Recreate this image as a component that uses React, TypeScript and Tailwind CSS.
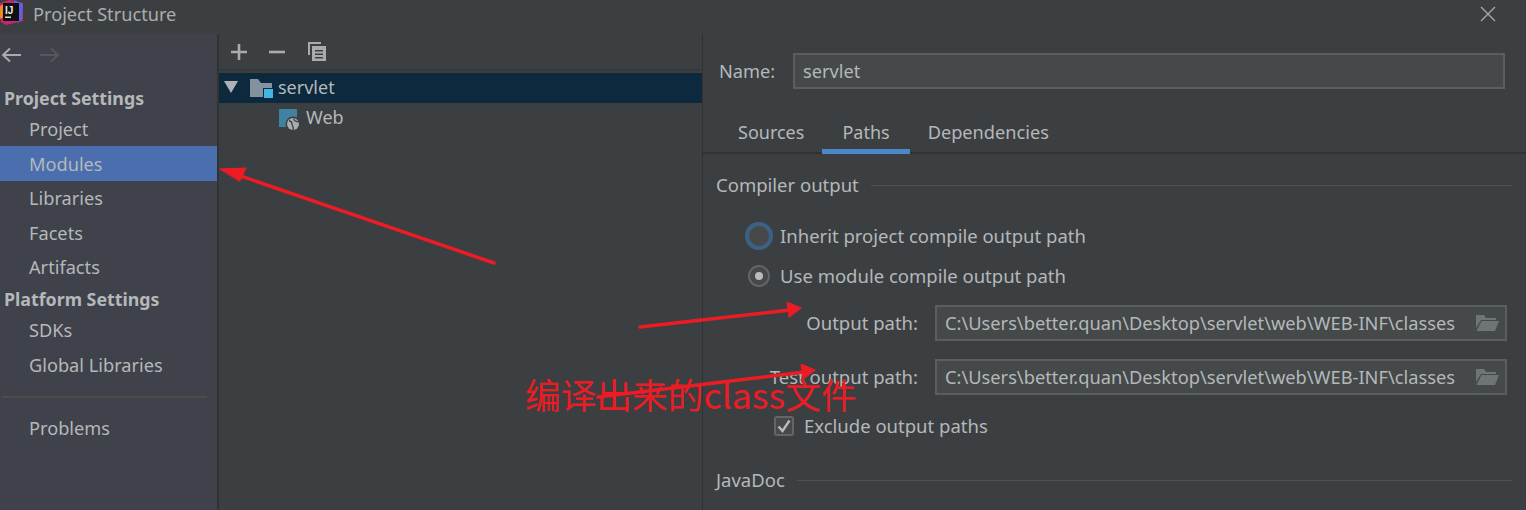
const font = "font-['Noto_Sans',sans-serif]";

function NavItem({ label, active, cls }: { label: string; active?: boolean; cls: string }) {
  return (
    <div className={`flex items-center pl-[29px] text-[18.2px] leading-none ${cls} ${active ? 'bg-[#4b6eaf]' : ''}`}>
      {label}
    </div>
  );
}

function PathRow({ label, mt }: { label: string; mt: string }) {
  return (
    <div className={`flex h-[36px] items-center ${mt}`}>
      <div className="w-[232px] pr-[17px] text-right">{label}</div>
      <div className="flex h-[36px] w-[572px] items-center justify-between border-2 border-[#5b5e60] bg-[#45494a] pl-[8px] pr-[6px]">
        <span className="whitespace-nowrap text-[18.25px]">C:\Users\better.quan\Desktop\servlet\web\WEB-INF\classes</span>
        <svg width="24" height="18" viewBox="0 0 24 18">
          <path d="M1 1h8l2 3h10v2H6L1 14z" fill="#6e7577" />
          <path d="M6.500 7H24l-4 10H1.500z" fill="#6e7577" />
        </svg>
      </div>
    </div>
  );
}

function Section({ label, mt }: { label: string; mt: string }) {
  return (
    <div className={`flex items-center gap-[12px] pl-[13px] pr-[14px] ${mt}`}>
      <span>{label}</span>
      <div className="h-px flex-1 bg-[#4f5254]" />
    </div>
  );
}

export default function App() {
  return (
    <div className={`relative h-[510px] w-[1526px] overflow-hidden bg-[#3c3f41] text-[18.5px] leading-[24px] text-[#b4b8ba] ${font}`}>
      <div className="flex h-[34px] items-center">
        <svg width="24" height="26" viewBox="0 0 24 26" className="mt-[-8px] shrink-0">
          <path d="M0 3 10 0 23 3 23 21 6 25 1 22z" fill="#c9266e" />
          <path d="M14 0 23 4 22 19 18 23z" fill="#5a63e0" />
          <path d="M0 6 4 4v13l-4 2z" fill="#f08a24" />
          <rect x="3" y="3" width="16" height="18" fill="#111" />
          <rect x="5" y="16.500" width="6" height="1.500" fill="#ddd" />
          <text x="5" y="13.500" fill="#eee" fontSize="10" fontWeight="700" fontFamily="Liberation Sans">IJ</text>
        </svg>
        <span className="ml-[9px] mt-[-6px] text-[18.2px] text-[#a9adaf]">Project Structure</span>
        <svg width="16" height="16" viewBox="0 0 16 16" className="ml-auto mr-[30px] mt-[-7px]" stroke="#a5a7a9" strokeWidth="1.400">
          <path d="M1 1l14 14M15 1 1 15" />
        </svg>
      </div>

      <div className="flex h-[476px]">
        <aside className="flex w-[217px] shrink-0 flex-col bg-[#3f424a]">
          <div className="flex h-[42px] items-center gap-[19px] pl-[1px]">
            <svg width="20" height="16" viewBox="0 0 20 16" fill="none" stroke="#a9acae" strokeWidth="2"><path d="M20 8H2M9 1.500 2 8l7 6.500" /></svg>
            <svg width="20" height="16" viewBox="0 0 20 16" fill="none" stroke="#55585a" strokeWidth="2"><path d="M0 8h18M11 1.500 18 8l-7 6.500" /></svg>
          </div>
          <div className="flex h-[44px] items-center pl-[4px] text-[17.8px] font-bold">Project Settings</div>
          <NavItem label="Project" cls="h-[18px]" />
          <NavItem label="Modules" active cls="h-[35px] mt-[8px] pt-[2px]" />
          <NavItem label="Libraries" cls="h-[34px]" />
          <NavItem label="Facets" cls="h-[35px] pt-[2px]" />
          <NavItem label="Artifacts" cls="h-[34px]" />
          <div className="flex h-[30px] items-center pl-[4px] text-[17.8px] font-bold">Platform Settings</div>
          <NavItem label="SDKs" cls="h-[32px]" />
          <NavItem label="Global Libraries" cls="h-[38px]" />
          <div className="mx-[2px] mt-[12px] h-[2px] w-[205px] bg-[#4b4d4d]" />
          <NavItem label="Problems" cls="h-[34px] mt-[13px]" />
        </aside>
        <div className="w-[2px] shrink-0 bg-[#323232]" />

        <section className="flex w-[483px] shrink-0 flex-col text-[18px]">
          <div className="flex h-[37px] items-center gap-[22px] border-b-2 border-[#36383a] pl-[12px]">
            <svg width="16" height="16" viewBox="0 0 16 16" fill="#a9acae"><path d="M6.700 0h2.600v6.700H16v2.600H9.300V16H6.700V9.300H0V6.700h6.700z" /></svg>
            <svg width="16" height="16" viewBox="0 0 16 16" fill="#a9acae"><rect y="6.700" width="16" height="2.600" /></svg>
            <svg width="20" height="20" viewBox="0 0 20 20" fill="#a9acae" className="mt-[-2px]">
              <path d="M1 1h13v2H3v11H1z" />
              <path d="M5 5h14v15H5zm3 4v1.500h8V9zm0 3.500V14h8v-1.500zm0 3.500v1.500h8V16z" fillRule="evenodd" />
            </svg>
          </div>
          <div className="mt-[2px] flex h-[30px] items-center bg-[#0d293e]">
            <svg width="14" height="12" viewBox="0 0 14 12" className="ml-[5px] mt-[-2px]"><path d="M0 0h14L7 12z" fill="#aeb2b5" /></svg>
            <svg width="24" height="20" viewBox="0 0 24 20" className="ml-[12px]">
              <path d="M0 1h8l3 4h11v14H0z" fill="#84929f" />
              <rect x="13" y="10" width="10" height="10" fill="#0d293e" />
              <rect x="14" y="11" width="9" height="9" fill="#40b6e0" />
            </svg>
            <span className="ml-[4px] pb-[2px]">servlet</span>
          </div>
          <div className="flex h-[30px] items-center pl-[60px]">
            <svg width="22" height="24" viewBox="0 0 22 24" className="mt-[6px]">
              <rect width="18" height="18" fill="#40829f" />
              <circle cx="14" cy="15" r="7.500" fill="#3c3f41" />
              <circle cx="14" cy="15" r="6" fill="#a9adb0" />
              <path d="M10 12c2 0 3 1 3 3s2 2 1 6M15 9.500c-1 2 2 3 4.500 3.500" fill="none" stroke="#3c3f41" strokeWidth="1.300" />
            </svg>
            <span className="ml-[5px] pb-[2px]">Web</span>
          </div>
        </section>
        <div className="w-px shrink-0 bg-[#323232]" />

        <main className="min-w-0 flex-1">
          <div className="mt-[19px] flex h-[35px] items-center pl-[16px] text-[18.2px]">
            <span className="w-[74px]">Name:</span>
            <div className="flex h-[36px] w-[712px] items-center border-2 border-[#5b5e60] bg-[#45494a] pl-[8px]">servlet</div>
          </div>
          <div className="mt-[26px] flex h-[40px] border-b-2 border-[#323232] pl-[17px] text-[18px]">
            <div className="px-[18px] pt-[6px]">Sources</div>
            <div className="h-[40px] border-b-[5px] border-[#4a88c7] px-[20px] pt-[6px]">Paths</div>
            <div className="px-[18px] pt-[6px] text-[18.2px]">Dependencies</div>
          </div>
          <Section label="Compiler output" mt="mt-[19px]" />

          <div className="mt-[25px] flex h-[28px] items-center pl-[42px]">
            <div className="flex h-[28px] w-[28px] items-center justify-center rounded-full border-[4px] border-[#3d6185] bg-[#45494a]" />
            <span className="ml-[7px]">Inherit project compile output path</span>
          </div>
          <div className="mt-[14px] flex h-[24px] items-center pl-[45px]">
            <div className="flex h-[22px] w-[22px] items-center justify-center rounded-full border-2 border-[#62666a] bg-[#45494a]">
              <div className="h-[8px] w-[8px] rounded-full bg-[#bbbbbb]" />
            </div>
            <span className="ml-[10px]">Use module compile output path</span>
          </div>
          <PathRow label="Output path:" mt="mt-[17px]" />
          <PathRow label="Test output path:" mt="mt-[18px]" />
          <div className="mt-[20px] flex h-[22px] items-center pl-[71px]">
            <div className="flex h-[20px] w-[20px] items-center justify-center rounded-[3px] border-2 border-[#636669] bg-[#45494a]">
              <svg width="14" height="14" viewBox="0 0 14 14" fill="none" stroke="#b8babc" strokeWidth="2.400"><path d="M1.500 7.500 5.500 12 12.500 1.500" /></svg>
            </div>
            <span className="ml-[10px]">Exclude output paths</span>
          </div>
          <Section label="JavaDoc" mt="mt-[31px]" />
        </main>
      </div>

      <svg width="1526" height="510" viewBox="0 0 1526 510" className="pointer-events-none absolute left-0 top-0" fill="none" stroke="#ed1c24" strokeWidth="3.500" strokeLinecap="round">
        <path d="M494 263 232 173" />
        <path d="M220 169 246 168 240 181z" fill="#ed1c24" strokeWidth="1" />
        <path d="M640 327 790 310" />
        <path d="M801 308 787 302 789 317z" fill="#ed1c24" strokeWidth="1" />
        <path d="M598 397 805 372" />
        <path d="M815 370 801 364 803 379z" fill="#ed1c24" strokeWidth="1" />
      </svg>
      <div className="pointer-events-none absolute left-[525px] top-[371px] whitespace-nowrap font-['Noto_Sans_CJK_SC',sans-serif] text-[35.700px] leading-[46px] text-[#ed1c24]">
        编译出来的class文件
      </div>
    </div>
  );
}
